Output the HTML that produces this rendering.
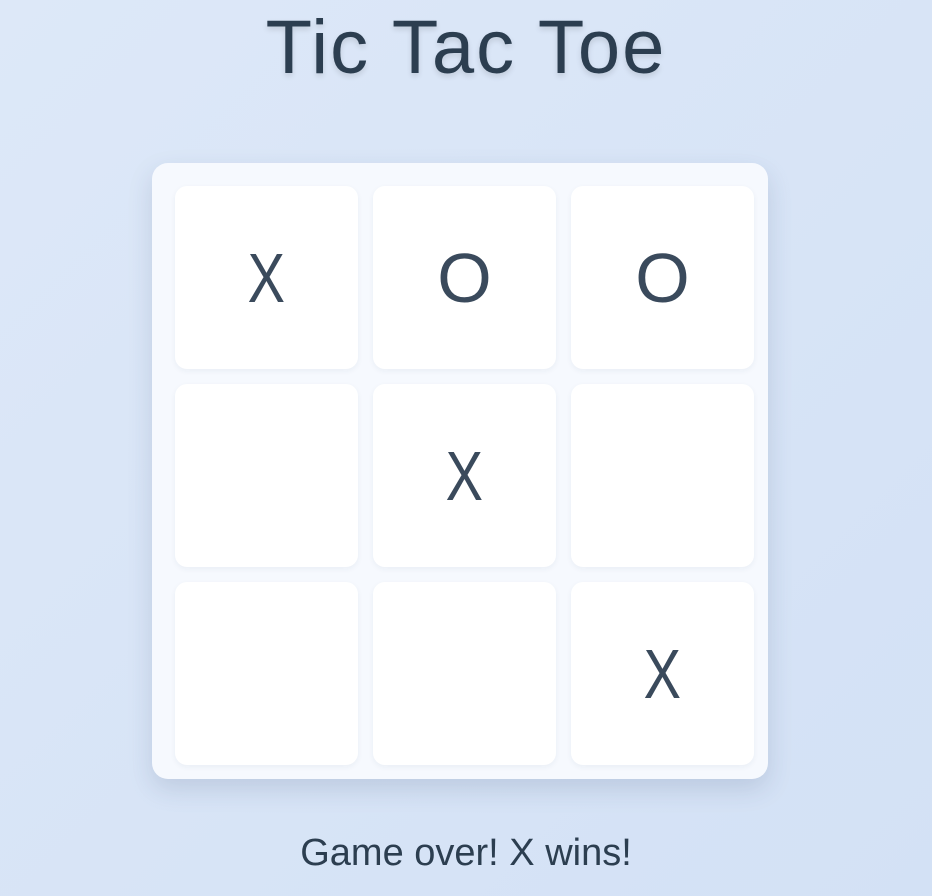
<!DOCTYPE html>
<html><head><meta charset="utf-8"><style>
html,body{margin:0;padding:0}
body{width:932px;height:896px;overflow:hidden;background:linear-gradient(135deg,#dde8f8 0%,#d3e1f5 100%);font-family:"Liberation Sans",sans-serif;color:#2c3e50;position:relative}
h1{position:absolute;top:0;left:0;width:932px;margin:0;text-align:center;font-weight:normal;font-size:76px;line-height:96px;color:#2c3e50;text-shadow:0 3px 6px rgba(0,0,0,0.12);letter-spacing:2px}
.board{position:absolute;left:152px;top:163px;width:616px;height:616px;background:#f6f9fe;border-radius:16px;box-shadow:0 10px 25px rgba(40,60,100,0.15)}
.cell{position:absolute;width:183px;height:183px;background:#fff;border-radius:12px;box-shadow:0 2px 6px rgba(40,60,100,0.06);display:flex;align-items:center;justify-content:center;font-size:70px;font-weight:normal;color:#3a4a5c}
.x{transform:scaleX(0.8)}
.status{position:absolute;top:832px;left:0;width:932px;text-align:center;font-size:38px;color:#2c3e50}
</style></head><body>
<h1>Tic Tac Toe</h1>
<div class="board">
<div class="cell" style="left:23px;top:23px"><span class="x">X</span></div>
<div class="cell" style="left:221px;top:23px">O</div>
<div class="cell" style="left:419px;top:23px">O</div>
<div class="cell" style="left:23px;top:221px"></div>
<div class="cell" style="left:221px;top:221px"><span class="x">X</span></div>
<div class="cell" style="left:419px;top:221px"></div>
<div class="cell" style="left:23px;top:419px"></div>
<div class="cell" style="left:221px;top:419px"></div>
<div class="cell" style="left:419px;top:419px"><span class="x">X</span></div>
</div>
<div class="status">Game over! X wins!</div>
</body></html>
